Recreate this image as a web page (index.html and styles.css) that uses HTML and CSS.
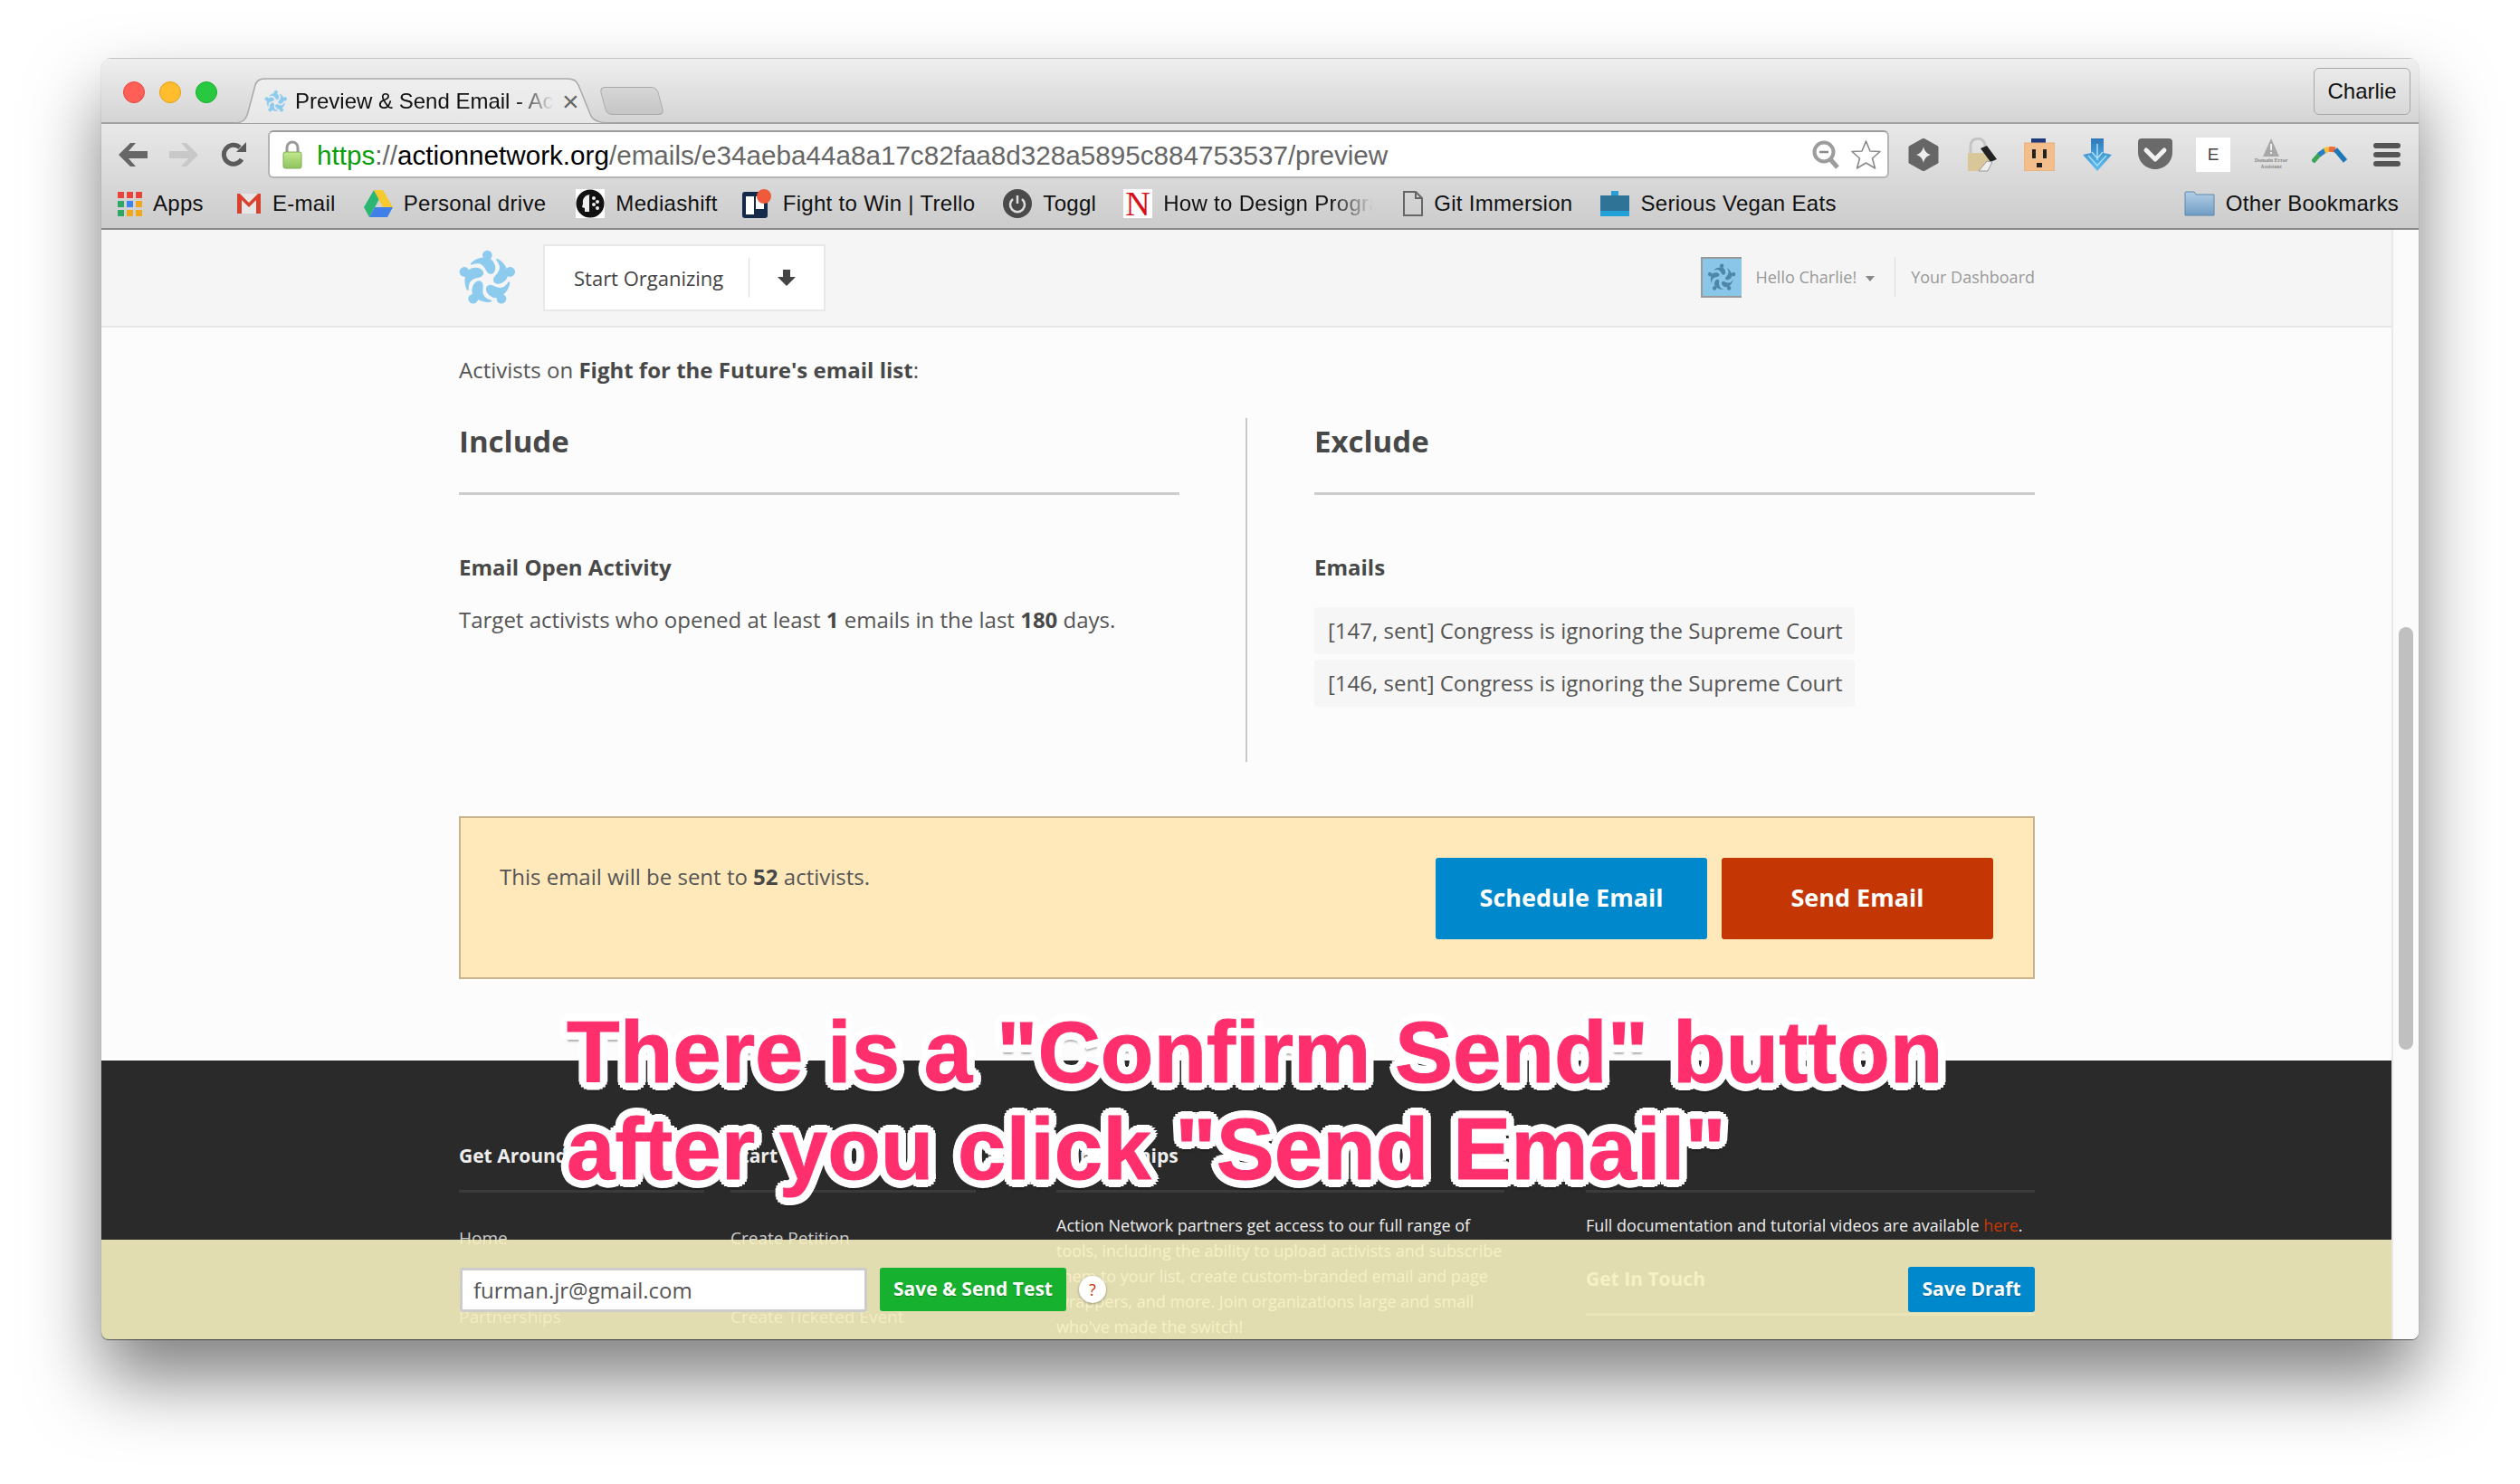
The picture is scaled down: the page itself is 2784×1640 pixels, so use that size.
FILE: index.html
```html
<!DOCTYPE html>
<html lang="en">
<head>
  <meta charset="UTF-8" />
  <title>Preview &amp; Send Email - Action Network</title>
  <link rel="stylesheet" href="styles.css">
</head>
<body>

  <svg class="defs" width="0" height="0">
    <symbol id="logo" viewBox="0 0 240 240">
      <g id="arm">
        <circle cx="118" cy="45" r="13" />
        <path d="M66 74 C80 58 110 50 128 60 C140 68 146 88 138 100 C132 108 122 104 118 96 C112 84 102 72 90 70 C82 69 74 71 66 74 Z" />
      </g>
      <use href="#arm" transform="rotate(72 118 125)" />
      <use href="#arm" transform="rotate(144 118 125)" />
      <use href="#arm" transform="rotate(216 118 125)" />
      <use href="#arm" transform="rotate(288 118 125)" />
    </symbol>
    <linearGradient id="tabfill" x1="0" y1="0" x2="0" y2="1">
      <stop offset="0" stop-color="#efefef" />
      <stop offset="1" stop-color="#e7e7e7" />
    </linearGradient>
    <linearGradient id="lockfill" x1="0" y1="0" x2="0" y2="1">
      <stop offset="0" stop-color="#c4e88e" />
      <stop offset="1" stop-color="#8cc45c" />
    </linearGradient>
    <linearGradient id="arrowfill" x1="0" y1="0" x2="0" y2="1">
      <stop offset="0" stop-color="#2f78b8" />
      <stop offset="1" stop-color="#5fc0f2" />
    </linearGradient>
    <linearGradient id="folderfill" x1="0" y1="0" x2="0" y2="1">
      <stop offset="0" stop-color="#b4cfe6" />
      <stop offset="1" stop-color="#6f9cc4" />
    </linearGradient>
  </svg>

  <div class="window">

    <div class="titlebar">
      <div class="lights">
        <span class="light red"></span>
        <span class="light yellow"></span>
        <span class="light green"></span>
      </div>
      <div class="tab">
        <svg class="tab-shape" viewBox="0 0 415 51" preserveAspectRatio="none">
          <path d="M0 50 C9 50 13 46 15 38 L23 8 C25 2 29 1 35 1 L368 1 C374 1 378 3 380 8 L393 40 C395 46 402 50 415 50" fill="url(#tabfill)" stroke="#a9a9a9" stroke-width="1.5" />
        </svg>
        <svg class="tab-icon"><use href="#logo" /></svg>
        <span class="tab-title">Preview &amp; Send Email - Action Network</span>
        <span class="tab-close">×</span>
      </div>
      <div class="newtab"></div>
      <div class="profile">Charlie</div>
    </div>

    <div class="chrome">
      <div class="toolbar">
        <div class="navbtn">
          <svg width="32" height="26" viewBox="0 0 32 26"><path d="M0 13 L13 0 H19 L11 9 H32 V17 H11 L19 26 H13 Z" fill="#666" /></svg>
        </div>
        <div class="navbtn">
          <svg width="32" height="26" viewBox="0 0 32 26"><path d="M32 13 L19 0 H13 L21 9 H0 V17 H21 L13 26 H19 Z" fill="#c8c8c8" /></svg>
        </div>
        <div class="navbtn">
          <svg width="30" height="30" viewBox="0 0 30 30"><path d="M23 20 A10.5 10.5 0 1 1 21 7" fill="none" stroke="#5a5a5a" stroke-width="5" /><path d="M17 12 L28 12 L28 1 Z" fill="#5a5a5a" /></svg>
        </div>
        <div class="omnibox">
          <svg class="lock" width="24" height="32" viewBox="0 0 24 32">
            <path d="M6 14 V8 A6 6 0 0 1 18 8 V14" fill="none" stroke="#9a9a9a" stroke-width="3" />
            <rect x="2" y="13" width="20" height="18" rx="2" fill="url(#lockfill)" stroke="#7fae55" />
          </svg>
          <span class="url"><span class="url-scheme">https</span><span class="url-dim">://</span><span class="url-host">actionnetwork.org</span><span class="url-dim">/emails/e34aeba44a8a17c82faa8d328a5895c884753537/preview</span></span>
          <svg class="omni-zoom" width="30" height="32" viewBox="0 0 30 32">
            <circle cx="13" cy="13" r="10.5" fill="none" stroke="#9c9c9c" stroke-width="4" />
            <path d="M8 13 H18" stroke="#8a8a8a" stroke-width="2.5" />
            <path d="M20 21 L28 30" stroke="#9c9c9c" stroke-width="5" />
          </svg>
          <svg class="omni-star" width="35" height="34" viewBox="0 0 35 34">
            <path d="M17.5 2 L22 13 L33 13.5 L24.5 21 L27.5 32 L17.5 26 L7.5 32 L10.5 21 L2 13.5 L13 13 Z" fill="#fff" stroke="#8a8a8a" stroke-width="1.6" stroke-linejoin="round" />
          </svg>
        </div>
        <div class="extensions">
          <div class="ext">
            <svg width="34" height="36" viewBox="0 0 34 36"><path d="M17 0 L33 9 V27 L17 36 L1 27 V9 Z" fill="#666" stroke="#666" stroke-linejoin="round" /><path d="M17 9 C18 14 21 17 25 18 C21 19 18 22 17 27 C16 22 13 19 9 18 C13 17 16 14 17 9 Z" fill="#eee" /></svg>
          </div>
          <div class="ext">
            <svg width="36" height="38" viewBox="0 0 36 38">
              <path d="M6 18 V9 A8 8 0 0 1 22 9 V18" fill="none" stroke="#c4c4c4" stroke-width="3" />
              <rect x="3" y="17" width="23" height="20" rx="1" fill="#d9c79a" />
              <path d="M17 12 L24 9 L35 24 L28 27 Z" fill="#222" />
              <path d="M24 26 L15 37 H25 L30 27 Z" fill="#eee" stroke="#999" />
            </svg>
          </div>
          <div class="ext">
            <svg width="34" height="36" viewBox="0 0 34 36">
              <rect x="8" y="0" width="16" height="6" fill="#1f3a7a" />
              <rect x="0" y="5" width="34" height="31" fill="#f3bd8c" stroke="#e6ab78" />
              <rect x="9" y="12" width="4" height="10" fill="#222" />
              <rect x="21" y="12" width="4" height="10" fill="#222" />
              <rect x="14" y="27" width="6" height="5" fill="#222" />
            </svg>
          </div>
          <div class="ext">
            <svg width="32" height="36" viewBox="0 0 32 36">
              <path d="M9 0 H23 V16 L32 18 L16 36 L0 18 L9 16 Z" fill="url(#arrowfill)" />
              <path d="M16 6 V24 M6 19 L16 30 L26 19 M10 15 L16 22 L22 15" fill="none" stroke="#a6def7" stroke-width="1.5" />
            </svg>
          </div>
          <div class="ext">
            <svg width="38" height="35" viewBox="0 0 38 35">
              <path d="M0 4 Q0 0 4 0 H34 Q38 0 38 4 V15 C38 27 28 34 19 34 C10 34 0 27 0 15 Z" fill="#6a6a6a" />
              <path d="M9 13 L19 23 L29 13" fill="none" stroke="#f2f2f2" stroke-width="5" stroke-linejoin="round" stroke-linecap="round" />
            </svg>
          </div>
          <div class="ext"><span class="ext-e">E</span></div>
          <div class="ext ext-domain">
            <svg width="20" height="20" viewBox="0 0 20 20"><path d="M10 0 L19 20 H1 Z" fill="#a8a8a8" /><rect x="9" y="6" width="2" height="7" fill="#eee" /><rect x="9" y="15" width="2" height="2" fill="#eee" /></svg>
            <span class="domain-label">Domain Error<br>Assistant</span>
          </div>
          <div class="ext">
            <svg width="39" height="18" viewBox="0 0 39 18">
              <path d="M1 17 L9 8" stroke="#3aa655" stroke-width="5" fill="none" />
              <path d="M8 9 L15 4" stroke="#2a7fc4" stroke-width="5.5" fill="none" />
              <path d="M14 4.5 L20 2.5" stroke="#efc23a" stroke-width="6" fill="none" />
              <path d="M19 2.5 L26 3.5" stroke="#ee6a3a" stroke-width="6" fill="none" />
              <path d="M26 3 L37 16" stroke="#1d78b8" stroke-width="5.5" fill="none" />
            </svg>
          </div>
          <div class="ext">
            <svg width="30" height="26" viewBox="0 0 30 26"><rect y="0" width="30" height="6" rx="3" fill="#555" /><rect y="10" width="30" height="6" rx="3" fill="#555" /><rect y="20" width="30" height="6" rx="3" fill="#555" /></svg>
          </div>
        </div>
      </div>

      <div class="bookmarks">
        <a class="bm">
          <svg width="27" height="27" viewBox="0 0 27 27">
            <rect x="0" y="0" width="7" height="7" fill="#e8443a" /><rect x="10" y="0" width="7" height="7" fill="#e8443a" /><rect x="20" y="0" width="7" height="7" fill="#e8443a" />
            <rect x="0" y="10" width="7" height="7" fill="#2fa866" /><rect x="10" y="10" width="7" height="7" fill="#3f84ee" /><rect x="20" y="10" width="7" height="7" fill="#f2a81c" />
            <rect x="0" y="20" width="7" height="7" fill="#2fa866" /><rect x="10" y="20" width="7" height="7" fill="#f2a81c" /><rect x="20" y="20" width="7" height="7" fill="#f2a81c" />
          </svg>
          Apps
        </a>
        <a class="bm bm-mail">
          <svg width="28" height="24" viewBox="0 0 28 24">
            <rect x="1" y="1" width="26" height="22" fill="#e6e6e6" />
            <path d="M1 23 V1 H4 L14 11 L24 1 H27 V23 H22 V8 L14 16 L6 8 V23 Z" fill="#d9402e" />
          </svg>
          E-mail
        </a>
        <a class="bm bm-drive">
          <svg width="32" height="30" viewBox="0 0 32 30">
            <path d="M11 0 L0 19 L6 30 L17 10 Z" fill="#2bb673" />
            <path d="M11 0 H21 L32 19 H21 Z" fill="#f6c92f" />
            <path d="M6 30 L12 19 H32 L26 30 Z" fill="#3f7fe8" />
          </svg>
          Personal drive
        </a>
        <a class="bm">
          <svg width="32" height="32" viewBox="0 0 32 32">
            <rect width="32" height="32" fill="#fff" />
            <circle cx="16" cy="16" r="15.5" fill="#111" />
            <path d="M17 6 C10 6 7 11 8 16 L7 20 L10 21 V25 H15 V6 Z" fill="#eee" />
            <circle cx="20" cy="10" r="2" fill="#eee" /><circle cx="24" cy="14" r="2" fill="#eee" /><circle cx="20" cy="17" r="2" fill="#eee" /><circle cx="24" cy="21" r="2" fill="#eee" />
          </svg>
          Mediashift
        </a>
        <a class="bm bm-trello">
          <svg width="33" height="32" viewBox="0 0 33 32">
            <rect x="0" y="3" width="28" height="29" rx="3" fill="#15294b" />
            <rect x="4" y="8" width="9" height="20" fill="#fff" />
            <rect x="15" y="8" width="9" height="14" fill="#fff" />
            <circle cx="24" cy="8" r="8" fill="#ee5a3a" />
          </svg>
          Fight to Win | Trello
        </a>
        <a class="bm bm-toggl">
          <svg width="32" height="32" viewBox="0 0 32 32">
            <circle cx="16" cy="16" r="16" fill="#4a4a4a" />
            <path d="M11 11 A8 8 0 1 0 21 11" fill="none" stroke="#ddd" stroke-width="2.5" />
            <path d="M16 7 V16" stroke="#ddd" stroke-width="2.5" />
          </svg>
          Toggl
        </a>
        <a class="bm bm-design">
          <span class="nyt">N</span>
          <span class="bm-clip">How to Design Programs</span>
        </a>
        <a class="bm">
          <svg width="22" height="28" viewBox="0 0 22 28"><path d="M1 1 H14 L21 8 V27 H1 Z M14 1 V8 H21" fill="none" stroke="#666" stroke-width="2" /></svg>
          Git Immersion
        </a>
        <a class="bm bm-vegan">
          <svg width="32" height="28" viewBox="0 0 32 28">
            <rect x="12" y="0" width="8" height="6" fill="#2a9fd6" />
            <rect x="0" y="5" width="32" height="17" fill="#2f7396" />
            <rect x="0" y="22" width="32" height="6" fill="#23a0d5" />
          </svg>
          Serious Vegan Eats
        </a>
        <a class="bm bm-other">
          <svg width="34" height="28" viewBox="0 0 34 28">
            <path d="M1 27 V2 Q1 1 2 1 H11 L13 4 H33 V27 Z" fill="url(#folderfill)" stroke="#5f88ab" />
          </svg>
          Other Bookmarks
        </a>
      </div>
    </div>

    <div class="page">
      <div class="page-body">

        <div class="site-nav">
          <div class="wrap site-nav-inner">
            <svg class="site-logo"><use href="#logo" /></svg>
            <div class="start-btn">
              <span class="start-label">Start Organizing</span>
              <span class="start-arrow">
                <svg width="20" height="20" viewBox="0 0 20 18"><path d="M6 0 H14 V8 H20 L10 18 L0 8 H6 Z" fill="#444" /></svg>
              </span>
            </div>
            <div class="user-menu">
              <svg class="user-avatar"><use href="#logo" /></svg>
              <span class="user-hello">Hello Charlie!</span>
              <span class="user-caret"></span>
              <span class="user-link">Your Dashboard</span>
            </div>
          </div>
        </div>

        <div class="wrap">
          <p class="lead">Activists on <strong>Fight for the Future's email list</strong>:</p>

          <div class="targets">
            <div class="target-col">
              <h3>Include</h3>
              <h4>Email Open Activity</h4>
              <p class="target-text">Target activists who opened at least <strong>1</strong> emails in the last <strong>180</strong> days.</p>
            </div>
            <div class="target-divider"></div>
            <div class="target-col">
              <h3>Exclude</h3>
              <h4 class="h4-chips">Emails</h4>
              <div class="chip">[147, sent] Congress is ignoring the Supreme Court</div>
              <div class="chip">[146, sent] Congress is ignoring the Supreme Court</div>
            </div>
          </div>

          <div class="send-box">
            <p class="send-note">This email will be sent to <strong>52</strong> activists.</p>
            <div class="send-actions">
              <a class="btn btn-blue">Schedule Email</a>
              <a class="btn btn-red">Send Email</a>
            </div>
          </div>
        </div>

        <div class="footer">
          <div class="wrap foot-grid">
            <div class="foot-col foot-a">
              <h5>Get Around</h5>
              <ul>
                <li>Home</li>
                <li>About</li>
                <li>Partnerships</li>
              </ul>
            </div>
            <div class="foot-col foot-b">
              <h5>Start</h5>
              <ul>
                <li>Create Petition</li>
                <li>Create Event</li>
                <li>Create Ticketed Event</li>
              </ul>
            </div>
            <div class="foot-col foot-c">
              <h5>Partnerships</h5>
              <p>Action Network partners get access to our full range of<br>tools, including the ability to upload activists and subscribe<br>them to your list, create custom-branded email and page<br>wrappers, and more. Join organizations large and small<br>who've made the switch!</p>
            </div>
            <div class="foot-col foot-d">
              <h5>Help</h5>
              <p>Full documentation and tutorial videos are available <span class="foot-here">here</span>.</p>
              <h5 class="foot-touch">Get In Touch</h5>
            </div>
          </div>
        </div>

        <div class="test-bar">
          <div class="wrap test-bar-inner">
            <div class="test-input">furman.jr@gmail.com</div>
            <a class="test-send">Save &amp; Send Test</a>
            <span class="test-help">?</span>
            <a class="test-draft">Save Draft</a>
          </div>
        </div>

        <div class="note">There is a "Confirm Send" button<br>after you click "Send Email"</div>
      </div>

      <div class="scrollbar"><div class="scroll-thumb"></div></div>
    </div>
  </div>

</body>
</html>
```

FILE: styles.css
```css
html, body {
  margin: 0;
  height: 100%;
}
body {
  width: 2784px;
  height: 1640px;
  padding: 64px 112px 0;
  box-sizing: border-box;
  overflow: hidden;
  background: #fff;
  font-family: "Open Sans", sans-serif;
  color: #555;
}
a {
  display: block;
}
.defs {
  position: absolute;
}

.window {
  height: 1416px;
  display: flex;
  flex-direction: column;
  border-radius: 10px 10px 8px 8px;
  overflow: hidden;
  box-shadow: 0 1px 1px rgba(0, 0, 0, 0.5), 0 44px 80px rgba(0, 0, 0, 0.5);
}

/* browser frame */
.titlebar {
  height: 73px;
  box-sizing: border-box;
  display: flex;
  background: linear-gradient(#efefef, #d4d4d4);
  border-top: 1px solid #c4c4c4;
  border-bottom: 2px solid #a2a2a2;
  font-family: "Liberation Sans", sans-serif;
}
.lights {
  display: flex;
  gap: 16px;
  padding: 25px 0 0 24px;
}
.light {
  width: 24px;
  height: 24px;
  border-radius: 50%;
  box-sizing: border-box;
}
.light.red { background: #ff5f57; border: 1px solid #e2463f; }
.light.yellow { background: #ffbd2e; border: 1px solid #e1a116; }
.light.green { background: #28c940; border: 1px solid #14ae2a; }

.tab {
  position: relative;
  align-self: flex-end;
  width: 415px;
  height: 51px;
  margin: 0 0 -2px 19px;
  display: flex;
  align-items: center;
  font-size: 24px;
  color: #111;
}
.tab-shape {
  position: absolute;
  left: 0;
  top: 0;
  width: 415px;
  height: 51px;
}
.tab-icon {
  position: relative;
  width: 32px;
  height: 32px;
  margin-left: 30px;
  fill: #8ccbee;
  stroke: #8ccbee;
  stroke-width: 6;
}
.tab-title {
  position: relative;
  width: 286px;
  margin-left: 5px;
  overflow: hidden;
  white-space: nowrap;
  -webkit-mask-image: linear-gradient(90deg, #000 85%, transparent);
  mask-image: linear-gradient(90deg, #000 85%, transparent);
}
.tab-close {
  position: relative;
  margin-left: 9px;
  font-size: 32px;
  line-height: 32px;
  color: #666;
}
.newtab {
  align-self: flex-end;
  width: 64px;
  height: 31px;
  margin: 0 0 8px -8px;
  box-sizing: border-box;
  background: linear-gradient(#d6d6d6, #c6c6c6);
  border: 1px solid #a8a8a8;
  border-radius: 6px;
  transform: skewX(15deg);
}
.profile {
  align-self: flex-end;
  margin: 0 9px 8px auto;
  width: 107px;
  height: 52px;
  box-sizing: border-box;
  border: 1px solid #a8a8a8;
  border-radius: 6px;
  display: flex;
  align-items: center;
  justify-content: center;
  font-size: 24px;
  color: #111;
}

.chrome {
  height: 117px;
  box-sizing: border-box;
  background: linear-gradient(#e8e8e8, #cccccc);
  border-bottom: 2px solid #8a8a8a;
  font-family: "Liberation Sans", sans-serif;
}
.toolbar {
  height: 60px;
  display: flex;
  align-items: flex-start;
  padding: 7px 0 0 7px;
  box-sizing: border-box;
}
.navbtn {
  width: 56px;
  height: 53px;
  display: flex;
  align-items: center;
  justify-content: center;
}
.omnibox {
  width: 1791px;
  height: 53px;
  margin-left: 9px;
  box-sizing: border-box;
  background: #fff;
  border: 2px solid #b4b4b4;
  border-top-color: #9c9c9c;
  border-radius: 6px;
  display: flex;
  align-items: center;
  padding-left: 13px;
}
.url {
  margin: 2px 0 0 15px;
  font-size: 29.65px;
  white-space: nowrap;
}
.url-scheme { color: #0a9d0a; }
.url-dim { color: #666; }
.url-host { color: #000; }
.omni-zoom {
  margin-left: auto;
}
.omni-star {
  margin: 0 6px 0 12px;
}
.extensions {
  display: flex;
  margin-left: 6px;
}
.ext {
  width: 64px;
  height: 53px;
  display: flex;
  flex-direction: column;
  align-items: center;
  justify-content: center;
}
.ext-e {
  width: 38px;
  height: 38px;
  background: #fff;
  color: #444;
  font-size: 19px;
  line-height: 38px;
  text-align: center;
}
.domain-label {
  font-family: "Liberation Serif", serif;
  font-size: 6px;
  line-height: 7px;
  font-weight: bold;
  text-align: center;
  color: #888;
  white-space: nowrap;
  margin-top: 1px;
}

.bookmarks {
  height: 55px;
  box-sizing: border-box;
  padding: 1px 22px 0 18px;
  display: flex;
  align-items: center;
  gap: 33px;
  font-size: 24px;
  letter-spacing: 0.3px;
  color: #111;
  white-space: nowrap;
}
.bm {
  display: flex;
  align-items: center;
  gap: 12px;
}
.bm-mail { margin-left: 3px; }
.bm-drive { margin-left: -2px; }
.bm-trello { margin-left: -6px; }
.bm-toggl { margin-left: -2px; }
.bm-design { margin-left: -3px; }
.bm-vegan { margin-left: -2px; }
.bm-clip {
  width: 232px;
  overflow: hidden;
  -webkit-mask-image: linear-gradient(90deg, #000 80%, transparent);
  mask-image: linear-gradient(90deg, #000 80%, transparent);
}
.bm-other {
  margin-left: auto;
}
.nyt {
  width: 32px;
  height: 32px;
  background: #fff;
  color: #d8101c;
  font-family: "Liberation Serif", serif;
  font-size: 38px;
  line-height: 32px;
  text-align: center;
  overflow: hidden;
}

/* page */
.page {
  flex: 1;
  min-height: 0;
  display: flex;
  background: #fcfcfc;
}
.page-body {
  position: relative;
  flex: 1;
  min-width: 0;
  overflow: hidden;
}
.scrollbar {
  width: 30px;
  box-sizing: border-box;
  background: #fbfbfb;
  border-left: 2px solid #e8e8e8;
  padding: 439px 0 0 6px;
}
.scroll-thumb {
  width: 16px;
  height: 467px;
  background: #c0c0c0;
  border-radius: 8px;
}
.wrap {
  width: 1741px;
  margin-left: 395px;
}

.site-nav {
  height: 108px;
  box-sizing: border-box;
  background: #f5f5f5;
  border-bottom: 2px solid #e6e6e6;
}
.site-nav-inner {
  display: flex;
  align-items: center;
  height: 104px;
}
.site-logo {
  width: 80px;
  height: 80px;
  margin: 2px 0 0 -8px;
  fill: #8ccbee;
  stroke: #8ccbee;
  stroke-width: 6;
  stroke-linejoin: round;
}
.start-btn {
  display: flex;
  align-items: center;
  width: 312px;
  height: 74px;
  margin: 2px 0 0 21px;
  box-sizing: border-box;
  background: #fff;
  border: 2px solid #e8e8e8;
  font-size: 22px;
  color: #444;
}
.start-label {
  flex: none;
  width: 226px;
  height: 44px;
  line-height: 44px;
  padding-left: 32px;
  box-sizing: border-box;
  border-right: 1px solid #ddd;
  white-space: nowrap;
}
.start-arrow {
  flex: 1;
  display: flex;
  justify-content: center;
}
.user-menu {
  margin-left: auto;
  display: flex;
  align-items: center;
  font-size: 18px;
  color: #999;
  white-space: nowrap;
}
.user-avatar {
  width: 45px;
  height: 45px;
  box-sizing: border-box;
  background: #8ac6e8;
  border-top: 2px solid #9a9a9a;
  border-bottom: 2px solid #9a9a9a;
  border-left: 2px solid #9a9a9a;
  fill: #4d86a8;
}
.user-hello {
  margin-left: 15px;
}
.user-caret {
  width: 0;
  height: 0;
  margin: 3px 0 0 10px;
  border-left: 5px solid transparent;
  border-right: 5px solid transparent;
  border-top: 6px solid #888;
}
.user-link {
  height: 44px;
  line-height: 44px;
  margin-left: 22px;
  padding-left: 17px;
  border-left: 1px solid #ddd;
}

.lead {
  margin: 30px 0 36px;
  font-size: 24px;
  line-height: 34px;
  color: #555;
}
strong {
  color: #484848;
}
.targets {
  display: flex;
  height: 380px;
}
.target-col {
  width: 796px;
}
.target-divider {
  width: 2px;
  margin: 0 74px 0 73px;
  background: #c8c8c8;
}
h3 {
  margin: 0;
  padding: 1px 0 31px;
  font-size: 33px;
  line-height: 50px;
  font-weight: 700;
  color: #484848;
  border-bottom: 3px solid #ccc;
}
h4 {
  margin: 63px 0 24px;
  font-size: 24px;
  line-height: 34px;
  font-weight: 700;
  color: #484848;
}
h4.h4-chips {
  margin-bottom: 27px;
}
.target-text {
  margin: 0;
  font-size: 24px;
  line-height: 34px;
  color: #555;
}
.chip {
  width: 597px;
  height: 52px;
  line-height: 52px;
  margin-bottom: 6px;
  padding-left: 15px;
  box-sizing: border-box;
  background: #f6f6f6;
  border-radius: 4px;
  font-size: 24px;
  color: #555;
  white-space: nowrap;
}

.send-box {
  height: 180px;
  margin-top: 60px;
  box-sizing: border-box;
  display: flex;
  justify-content: space-between;
  padding: 44px 44px 0 43px;
  background: #ffe9bb;
  border: 2px solid #c9b48f;
}
.send-note {
  margin: 4px 0 0;
  font-size: 24px;
  line-height: 34px;
  color: #555;
}
.send-actions {
  display: flex;
  gap: 16px;
}
.btn {
  width: 300px;
  height: 90px;
  line-height: 88px;
  text-align: center;
  border-radius: 3px;
  color: #fff;
  font-size: 27px;
  font-weight: 700;
}
.btn-blue { background: #0088cc; }
.btn-red { background: #c53605; }

.footer {
  height: 308px;
  margin-top: 90px;
  background: #2a2a2a;
  color: #eee;
}
.foot-grid {
  display: flex;
  padding-top: 90px;
}
.foot-col p {
  margin: 22px 0 0;
  font-size: 18px;
  line-height: 28px;
  white-space: nowrap;
}
.foot-a { width: 271px; }
.foot-b { width: 271px; margin-left: 29px; }
.foot-c { width: 495px; margin-left: 89px; }
.foot-d { width: 496px; margin-left: 90px; }
h5 {
  margin: 0;
  padding-bottom: 23px;
  font-size: 21px;
  line-height: 30px;
  font-weight: 700;
  color: #eee;
  border-bottom: 3px solid #3b3b3b;
}
h5.foot-touch {
  margin-top: 30px;
  border-bottom-color: #777;
}
.foot-col ul {
  margin: 29px 0 0;
  padding: 0;
  list-style: none;
  font-size: 19px;
  color: #ccc;
}
.foot-col li {
  height: 43.5px;
  line-height: 43.5px;
}
.foot-here {
  color: #c53605;
}

.test-bar {
  position: absolute;
  left: 0;
  right: 0;
  bottom: 0;
  height: 110px;
  background: rgba(246, 239, 192, 0.9);
}
.test-bar-inner {
  height: 110px;
  display: flex;
  align-items: center;
}
.test-input {
  width: 450px;
  height: 49px;
  margin-left: 1px;
  box-sizing: border-box;
  line-height: 43px;
  padding-left: 12px;
  background: #fff;
  border: 3px solid #ccc;
  border-radius: 3px;
  font-size: 24px;
  color: #555;
}
.test-send {
  width: 206px;
  height: 48px;
  line-height: 46px;
  margin-left: 14px;
  text-align: center;
  background: #16b22f;
  border-radius: 3px;
  color: #fff;
  font-size: 21px;
  font-weight: 700;
  text-shadow: 0 1px 1px rgba(0, 0, 0, 0.3);
}
.test-help {
  width: 30px;
  height: 30px;
  line-height: 30px;
  margin-left: 14px;
  text-align: center;
  background: #fff;
  border-radius: 50%;
  box-shadow: 0 1px 3px rgba(0, 0, 0, 0.35);
  color: #c53605;
  font-size: 18px;
}
.test-draft {
  width: 140px;
  height: 50px;
  line-height: 48px;
  margin-left: auto;
  text-align: center;
  background: #0088cc;
  border-radius: 3px;
  color: #fff;
  font-size: 21px;
  font-weight: 700;
  text-shadow: 0 1px 1px rgba(0, 0, 0, 0.3);
}

/* annotation pasted over the shot */
.note {
  position: absolute;
  left: 514px;
  top: 855px;
  font-family: "Liberation Sans", sans-serif;
  font-size: 96px;
  line-height: 107px;
  font-weight: 700;
  color: #ff2f6e;
  -webkit-text-stroke: 1px #ff2f6e;
  white-space: nowrap;
  text-shadow:
    9px 0 0 #fff, 8.3px 3.4px 0 #fff, 6.4px 6.4px 0 #fff, 3.4px 8.3px 0 #fff,
    0 9px 0 #fff, -3.4px 8.3px 0 #fff, -6.4px 6.4px 0 #fff, -8.3px 3.4px 0 #fff,
    -9px 0 0 #fff, -8.3px -3.4px 0 #fff, -6.4px -6.4px 0 #fff, -3.4px -8.3px 0 #fff,
    0 -9px 0 #fff, 3.4px -8.3px 0 #fff, 6.4px -6.4px 0 #fff, 8.3px -3.4px 0 #fff,
    4px 4px 0 #fff, -4px 4px 0 #fff, -4px -4px 0 #fff, 4px -4px 0 #fff,
    0 11px 2px rgba(0, 0, 0, 0.3);
}
```
